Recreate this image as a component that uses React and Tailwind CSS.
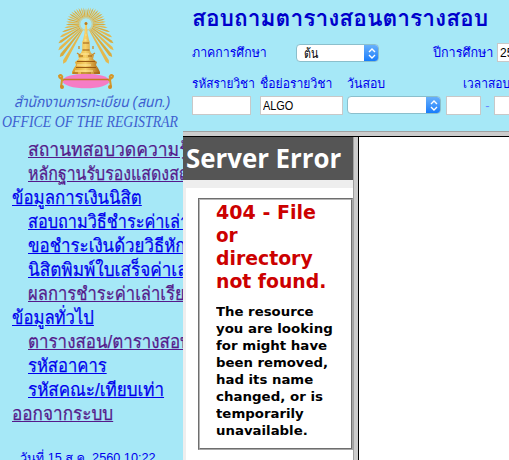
import { useLayoutEffect, useRef } from "react";

// Keeps a line of text at a fixed advance width.
function Fit({ width, className = "", children }) {
  const ref = useRef(null);
  useLayoutEffect(() => {
    const el = ref.current;
    el.style.transform = "none";
    el.style.transform = `scaleX(${width / el.offsetWidth})`;
  }, [width]);
  return (
    <span className="block shrink-0" style={{ width }}>
      <span ref={ref} className={`inline-block origin-left whitespace-nowrap ${className}`}>
        {children}
      </span>
    </span>
  );
}

const links = [
  { text: "สถานทสอบวดความรู้", width: 161, sub: true, visited: true },
  { text: "หลักฐานรับรองแสดงสถานภาพ", width: 210, sub: true, visited: true },
  { text: "ข้อมูลการเงินนิสิต", width: 130 },
  { text: "สอบถามวิธีชำระค่าเล่าเรียน", width: 196, sub: true },
  { text: "ขอชำระเงินด้วยวิธีหักบัญชี", width: 194, sub: true },
  { text: "นิสิตพิมพ์ใบเสร็จค่าเล่าเรียน", width: 206, sub: true },
  { text: "ผลการชำระค่าเล่าเรียน", width: 168, sub: true, visited: true },
  { text: "ข้อมูลทั่วไป", width: 82 },
  { text: "ตารางสอน/ตารางสอบ", width: 163, sub: true, visited: true },
  { text: "รหัสอาคาร", width: 79, sub: true },
  { text: "รหัสคณะ/เทียบเท่า", width: 136, sub: true },
  { text: "ออกจากระบบ", width: 101, visited: true },
];

const rays = Array.from({ length: 37 }, (_, i) => {
  const deg = 120 + i * (300 / 36);
  const a = (deg * Math.PI) / 180;
  const down = Math.max(0, Math.sin(a));
  const r = 16 + 4 * Math.abs(Math.cos(a)) + 35 * Math.pow(down, 1.6);
  const p = (rad, ang) => `${(36 + rad * Math.cos(ang)).toFixed(2)},${(20 + rad * Math.sin(ang)).toFixed(2)}`;
  return `${p(7, a - 0.07)} ${p(r - 3, a - 0.04)} ${p(r, a)} ${p(r - 3, a + 0.04)} ${p(7, a + 0.07)}`;
});

function Emblem() {
  return (
    <svg className="mt-[4px] ml-[50px] block h-[88px] w-[72px]" viewBox="0 0 72 88">
      <defs>
        <linearGradient id="gold" x1="0" x2="1">
          <stop offset="0" stopColor="#d99a24" />
          <stop offset=".48" stopColor="#f7d36a" />
          <stop offset="1" stopColor="#ad6a14" />
        </linearGradient>
      </defs>
      {rays.map((points, i) => (
        <polygon key={i} points={points} fill={i % 2 ? "#d9ab3e" : "#e4b84d"} />
      ))}
      <circle cx="36" cy="20" r="6.3" fill="#a6e8f7" stroke="#dfb64d" strokeWidth=".7" />
      <ellipse cx="36" cy="77" rx="23.5" ry="7.3" fill="#f67cc5" />
      <path d="M13 75.5H59" fill="none" stroke="#c77825" strokeWidth="1.3" />
      <path d="M35.3 18h1.4l.8 11 1.5 7 .8 2v8l1.2 3 3 2-1 4 4 3-1 3 2 3 2 4v2H22v-2l2-4 2-3-1-3 4-3-1-4 3-2 1.2-3v-8l.8-2 1.5-7z" fill="url(#gold)" />
      <circle cx="36" cy="19.5" r="1.5" fill="#b97c20" />
      <path d="M33 39h6M32.5 46h7M29 52h4M38 52h4M27 57.5h18M26 63.5h20M23 69h5M31 69h10M44 69h5" stroke="#9c5c13" strokeWidth="1.2" />
      <path d="M35.5 31h1M34.5 36h2M31 50h8M29 55h10M27 61h14M25 67h18" stroke="#ffe9a0" strokeWidth="1" />
      <path d="M29 42v3M43 42v3M27 49l3 2M45 49l-3 2" stroke="#c98a2c" strokeWidth="1.3" />
      <path d="M13 77c0-3-4-2-4-5 2-2 4 0 3 2M12 76l-1 7M59 77c0-3 4-2 4-5-2-2-4 0-3 2M60 76l1 7" fill="none" stroke="#d59728" strokeWidth="2" />
      <circle cx="12" cy="83" r="2" fill="#cf8e25" />
      <circle cx="60" cy="83" r="2" fill="#cf8e25" />
    </svg>
  );
}

function Select({ children, className }) {
  return (
    <div className={`flex h-[18px] shrink-0 overflow-hidden rounded-[4px] border border-[#8bbfcc] bg-white ${className}`}>
      <div className="flex-1 pl-[7px] text-black">{children}</div>
      <div className="-my-px -mr-px flex w-[15px] items-center justify-center bg-gradient-to-b from-[#6bb3fa] to-[#0a78fb]">
        <svg className="h-[11px] w-[8px]" viewBox="0 0 8 11" fill="none" stroke="white" strokeWidth="1.4">
          <path d="M1 4l3-3 3 3M1 7l3 3 3-3" />
        </svg>
      </div>
    </div>
  );
}

function Field({ children, className }) {
  return (
    <div className={`h-[19px] shrink-0 border border-[#c8c8c8] bg-white pl-[2px] text-[12px] leading-[18px] text-black ${className}`}>
      {children}
    </div>
  );
}

export default function App() {
  return (
    <div className="flex h-[460px] w-[509px] overflow-hidden bg-[#a6e8f7] font-['Liberation_Sans','Loma','Noto_Sans_Thai_Looped','Noto_Sans_Thai',sans-serif]">
      <aside className="h-full w-[183px] shrink-0 overflow-hidden">
        <div className="h-[134px] text-[#3d5fd0]">
          <Emblem />
          <div className="h-[20px] pl-[14px] font-['Liberation_Sans','Noto_Sans_Thai',sans-serif] text-[15px] leading-[20px] italic">
            <Fit width={156}>สำนักงานการทะเบียน (สนท.)</Fit>
          </div>
          <div className="h-[20px] pl-[2px] font-['Liberation_Serif',serif] text-[16px] leading-[20px] italic">
            <Fit width={176}>OFFICE OF THE REGISTRAR</Fit>
          </div>
        </div>
        <nav className="text-[18.5px] leading-[24px]">
          {links.map((l) => (
            <div key={l.text} className={`h-[24px] ${l.sub ? "pl-[28px]" : "pl-[12px]"} ${l.visited ? "text-[#551a8b]" : "text-[#0000ee]"}`}>
              <Fit width={l.width} className="underline [-webkit-text-stroke:0.25px_currentColor]">{l.text}</Fit>
            </div>
          ))}
        </nav>
        <div className="mt-[22px] pl-[20px] text-[12.5px] leading-[20px] text-[#0000ee]">
          <Fit width={136}>วันที่ 15 ส.ค. 2560 10:22</Fit>
        </div>
      </aside>

      <main className="flex h-full min-w-0 flex-1 flex-col overflow-hidden">
        <section className="h-[131px] shrink-0 overflow-hidden pl-[9px] text-[13px] text-[#0000ee]">
          <h1 className="h-[43px] pt-[3px] text-[23px] leading-[30px] font-bold text-[#0000cc]">
            <Fit width={296}>สอบถามตารางสอนตารางสอบ</Fit>
          </h1>
          <div className="flex h-[31px] w-[400px] leading-[20px]">
            <Fit width={75}>ภาคการศึกษา</Fit>
            <Select className="mt-px ml-[29px] w-[83px]">
              <span className="block leading-[17px]"><Fit width={14}>ต้น</Fit></span>
            </Select>
            <div className="ml-[54px]"><Fit width={60}>ปีการศึกษา</Fit></div>
            <Field className="ml-[4px] w-[40px]">2560</Field>
          </div>
          <div className="flex h-[22px] w-[400px] leading-[20px]">
            <Fit width={63}>รหัสรายวิชา</Fit>
            <div className="ml-[5px]"><Fit width={72}>ชื่อย่อรายวิชา</Fit></div>
            <div className="ml-[15px]"><Fit width={38}>วันสอบ</Fit></div>
            <div className="ml-[78px]"><Fit width={47}>เวลาสอบ</Fit></div>
          </div>
          <div className="flex w-[400px]">
            <Field className="w-[59px]" />
            <Field className="ml-[9px] w-[83px]"><Fit width={30}>ALGO</Fit></Field>
            <Select className="ml-[4px] w-[94px]" />
            <Field className="ml-[5px] w-[35px]" />
            <span className="w-[13px] shrink-0 text-center leading-[20px] text-[#6688ff]">-</span>
            <Field className="w-[35px]" />
          </div>
        </section>
        <div className="h-[6px] shrink-0 border-t border-b border-t-[#a0a0a0] border-b-black bg-[#cccccc]" />
        <div className="flex min-h-0 flex-1">
          <section className="w-[170px] shrink-0 overflow-hidden bg-[#eeeeee]">
            <div className="h-[43px] bg-[#555555] pl-[3px] font-['Trebuchet_MS','Open_Sans',sans-serif] text-[27px] leading-[42px] font-bold text-white">
              <Fit width={155}>Server Error</Fit>
            </div>
            <div className="mt-[8px] ml-[3px] h-[272px] bg-white pt-[10px] pl-[12px]">
              <div className="h-[252px] border border-[#6e6e6e] border-r-[#a8a8a8] border-b-[#a8a8a8] font-['DejaVu_Sans',sans-serif] font-bold">
                <div className="h-full border border-[#b5b5b5] border-r-[#6e6e6e] border-b-[#6e6e6e] pt-[1px] pl-[16px]">
                  <h2 className="text-[20px] leading-[23px] text-[#cc0000]">
                    <Fit width={100}>404 - File</Fit>
                    <Fit width={22}>or</Fit>
                    <Fit width={97}>directory</Fit>
                    <Fit width={110}>not found.</Fit>
                  </h2>
                  <div className="mt-[10px] text-[13px] leading-[17px] text-black">
                    <Fit width={98}>The resource</Fit>
                    <Fit width={117}>you are looking</Fit>
                    <Fit width={111}>for might have</Fit>
                    <Fit width={112}>been removed,</Fit>
                    <Fit width={97}>had its name</Fit>
                    <Fit width={107}>changed, or is</Fit>
                    <Fit width={88}>temporarily</Fit>
                    <Fit width={92}>unavailable.</Fit>
                  </div>
                </div>
              </div>
            </div>
          </section>
          <div className="w-[6px] shrink-0 border-r border-l border-r-black border-l-[#a0a0a0] bg-[#cccccc]" />
          <div className="flex-1 bg-white" />
        </div>
      </main>
    </div>
  );
}
